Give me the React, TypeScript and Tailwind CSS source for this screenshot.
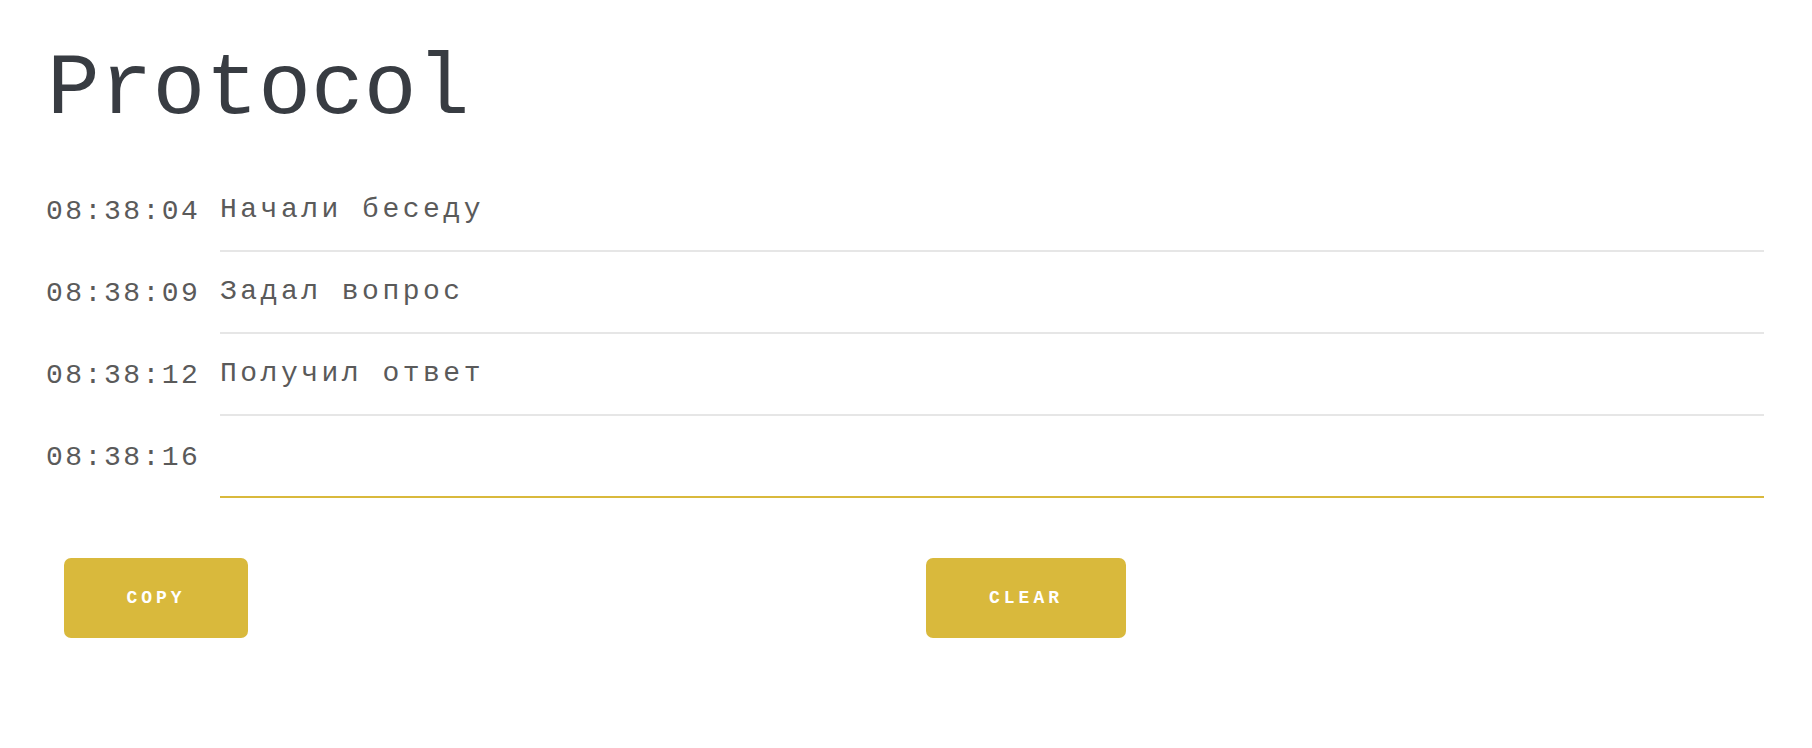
import { useState } from "react";

type Entry = { time: string; text: string };

const initialEntries: Entry[] = [
  { time: "08:38:04", text: "Начали беседу" },
  { time: "08:38:09", text: "Задал вопрос" },
  { time: "08:38:12", text: "Получил ответ" },
];

const App = () => {
  const [entries, setEntries] = useState<Entry[]>(initialEntries);
  const [draft, setDraft] = useState("");

  return (
    <div
      className="min-h-screen bg-white pl-[44px] pr-[48px] pt-[40px] text-[#5a5a5a]"
      style={{ fontFamily: '"Courier New", "Liberation Mono", monospace' }}
    >
      {/* заголовок */}
      <h1 className="ml-[3px] text-[88px] leading-[100px] text-[#383c42]">Protocol</h1>

      {/* записи */}
      <div className="mt-[30px]">
        {entries.map((e) => (
          <div key={e.time} className="flex items-end h-[82px]">
            <span className="w-[176px] pl-[2px] shrink-0 text-[28px] tracking-[2.5px] pb-[22px] leading-[36px]">
              {e.time}
            </span>
            <div className="flex-1 border-b-2 border-[#e6e6e6] pb-[22px] text-[28px] tracking-[3.5px] leading-[36px]">
              {e.text}
            </div>
          </div>
        ))}
        <div className="flex items-end h-[82px]">
          <span className="w-[176px] pl-[2px] shrink-0 text-[28px] tracking-[2.5px] pb-[22px] leading-[36px]">
            08:38:16
          </span>
          <input
            value={draft}
            onChange={(ev) => setDraft(ev.target.value)}
            className="flex-1 border-b-2 border-[#d9b93c] pb-[22px] text-[28px] tracking-[3.5px] leading-[36px] outline-none bg-transparent"
          />
        </div>
      </div>

      {/* кнопки */}
      <div className="grid grid-cols-2 mt-[60px] pl-[20px]">
        <div>
          <button
            onClick={() => navigator.clipboard?.writeText(entries.map((e) => `${e.time} ${e.text}`).join("\n"))}
            className="w-[184px] h-[80px] rounded-[7px] bg-[#d9b93c] text-white font-bold text-[18px] tracking-[4px]"
          >
            COPY
          </button>
        </div>
        <div className="pl-[12px]">
          <button
            onClick={() => setEntries([])}
            className="w-[200px] h-[80px] rounded-[7px] bg-[#d9b93c] text-white font-bold text-[18px] tracking-[4px]"
          >
            CLEAR
          </button>
        </div>
      </div>
    </div>
  );
};

export default App;
